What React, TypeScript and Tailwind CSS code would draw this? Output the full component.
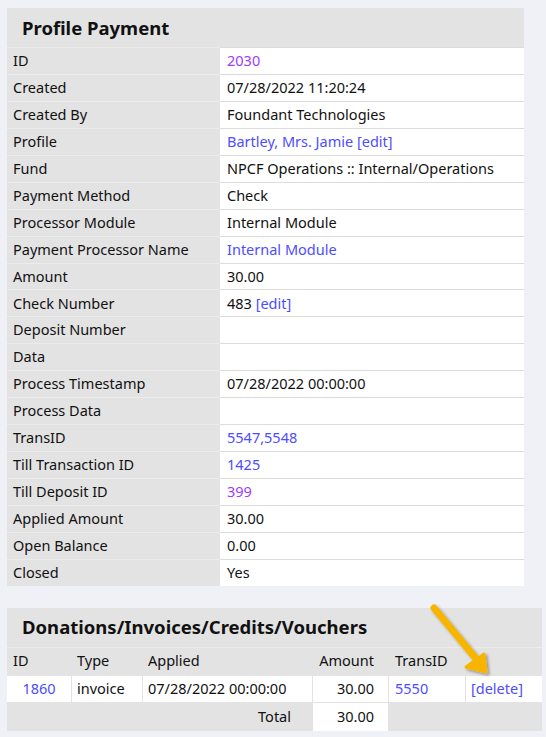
import React from 'react'

const blue = 'text-[#4d4dff]'
const purple = 'text-[#9d3cff]'

type Row = { label: string; value?: React.ReactNode }

const rows: Row[] = [
  { label: 'ID', value: <span className={purple}>2030</span> },
  { label: 'Created', value: '07/28/2022 11:20:24' },
  { label: 'Created By', value: 'Foundant Technologies' },
  { label: 'Profile', value: <span className={blue}>Bartley, Mrs. Jamie [edit]</span> },
  { label: 'Fund', value: 'NPCF Operations :: Internal/Operations' },
  { label: 'Payment Method', value: 'Check' },
  { label: 'Processor Module', value: 'Internal Module' },
  { label: 'Payment Processor Name', value: <span className={blue}>Internal Module</span> },
  { label: 'Amount', value: '30.00' },
  {
    label: 'Check Number',
    value: (
      <span>
        483 <span className={blue}>[edit]</span>
      </span>
    ),
  },
  { label: 'Deposit Number' },
  { label: 'Data' },
  { label: 'Process Timestamp', value: '07/28/2022 00:00:00' },
  { label: 'Process Data' },
  { label: 'TransID', value: <span className={blue}>5547,5548</span> },
  { label: 'Till Transaction ID', value: <span className={blue}>1425</span> },
  { label: 'Till Deposit ID', value: <span className={purple}>399</span> },
  { label: 'Applied Amount', value: '30.00' },
  { label: 'Open Balance', value: '0.00' },
  { label: 'Closed', value: 'Yes' },
]

function Arrow() {
  return (
    <svg className="absolute left-0 top-0 pointer-events-none" width="546" height="737">
      <defs>
        <filter id="sh" x="-20%" y="-20%" width="140%" height="140%">
          <feDropShadow dx="2" dy="2" stdDeviation="1.5" floodColor="#000" floodOpacity="0.35" />
        </filter>
      </defs>
      <g filter="url(#sh)" fill="#f7b500" stroke="#f7b500" strokeLinecap="round" strokeLinejoin="round">
        <line x1="434" y1="608" x2="478" y2="661" strokeWidth="7" />
        <polygon points="466,667 484,654 486,672" strokeWidth="3" />
      </g>
    </svg>
  )
}

export default function App() {
  return (
    <div
      className="relative min-h-[737px] w-[546px] bg-[#f0f1f6] pt-[8px] px-[7px] text-[14.5px] text-[#111]"
      style={{ fontFamily: '"Noto Sans", "Open Sans", sans-serif' }}
    >
      {/* Profile Payment */}
      <div className="w-[517px] bg-[#e3e3e3]">
        <div className="h-[39px] flex items-center px-[15px] text-[18.5px] font-bold">Profile Payment</div>
        {rows.map((r) => (
          <div key={r.label} className="grid grid-cols-[213px_1fr] h-[26.95px]">
            <div className="border-t border-[#ececec] px-[6px] flex items-center">{r.label}</div>
            <div className="border-t border-[#dcdcdc] bg-white px-[7px] flex items-center">{r.value}</div>
          </div>
        ))}
      </div>

      {/* Donations/Invoices/Credits/Vouchers */}
      <div className="mt-[22px] w-[535px] bg-[#e3e3e3]">
        <div className="h-[39px] flex items-center px-[15px] text-[18.5px] font-bold">
          Donations/Invoices/Credits/Vouchers
        </div>
        <div className="grid grid-cols-[64px_70px_169px_75px_76px_1fr] gap-x-[1px] gap-y-[1px] border-t border-[#ececec]">
          <div className="h-[27px] flex items-center px-[6px]">ID</div>
          <div className="flex items-center px-[5px]">Type</div>
          <div className="flex items-center px-[5px]">Applied</div>
          <div className="flex items-center justify-end px-[14px]">Amount</div>
          <div className="flex items-center px-[6px]">TransID</div>
          <div />

          <div className={`h-[26px] bg-white flex items-center justify-center ${blue}`}>1860</div>
          <div className="bg-white flex items-center px-[5px]">invoice</div>
          <div className="bg-white flex items-center px-[5px]">07/28/2022 00:00:00</div>
          <div className="bg-white flex items-center justify-end px-[14px]">30.00</div>
          <div className={`bg-white flex items-center px-[6px] ${blue}`}>5550</div>
          <div className={`bg-white flex items-center px-[5px] ${blue}`}>[delete]</div>

          <div className="col-span-3 h-[28px] flex items-center justify-end pr-[21px]">Total</div>
          <div className="bg-white flex items-center justify-end px-[14px]">30.00</div>
          <div className="col-span-2" />
        </div>
      </div>

      <Arrow />
    </div>
  )
}
